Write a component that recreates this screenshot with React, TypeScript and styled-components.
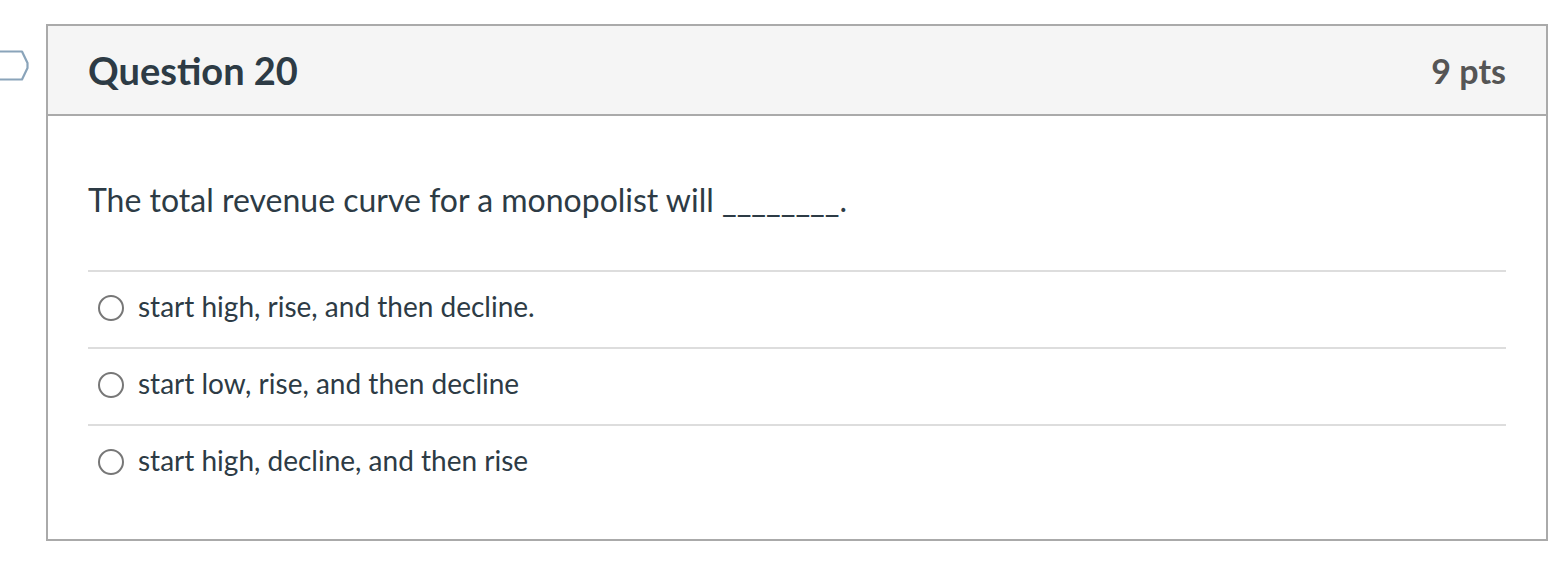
import React from 'react'
import styled, { createGlobalStyle } from 'styled-components'

const answers = [
  'start high, rise, and then decline.',
  'start low, rise, and then decline',
  'start high, decline, and then rise'
]

const GlobalStyle = createGlobalStyle`
  html, body {
    margin: 0;
    padding: 0;
    background: #fff;
  }
  body {
    font-family: Lato, "Noto Sans", sans-serif;
    color: #2d3b45;
  }
`

const App = () => {
  return (
    <Page>
      <GlobalStyle />
      <QuestionCard>
        <Flag width='30' height='32' viewBox='0 0 30 32'>
          <path d='M-4 1.5 H22 L27.5 13 V18 L22 29.5 H-4' fill='none' stroke='#8aa4ba' strokeWidth='2.2' strokeLinejoin='round' />
        </Flag>
        <Header>
          <Title>Question 20</Title>
          <Points>9 pts</Points>
        </Header>
        <Body>
          <QuestionText>The total revenue curve for a monopolist will ________.</QuestionText>
          <AnswerList>
            {answers.map((answer, index) => (
              <AnswerRow key={index}>
                <Radio type='radio' name='q20' />
                <AnswerLabel>{answer}</AnswerLabel>
              </AnswerRow>
            ))}
          </AnswerList>
        </Body>
      </QuestionCard>
    </Page>
  )
}

export default App

const Page = styled.div`
  padding: 24px 20px 40px 46px;
  width: 1568px;
  box-sizing: border-box;
`
const QuestionCard = styled.div`
  position: relative;
  width: 1502px;
  box-sizing: border-box;
  border: 2px solid #aaaaaa;
`
const Flag = styled.svg`
  position: absolute;
  left: -48px;
  top: 24px;
`
const Header = styled.div`
  display: flex;
  align-items: center;
  justify-content: space-between;
  height: 90px;
  box-sizing: border-box;
  padding: 0 40px;
  background: #f5f5f5;
  border-bottom: 2px solid #aaaaaa;
`
const Title = styled.h2`
  margin: 0;
  font-size: 38px;
  font-weight: 700;
  color: #2d3b45;
`
const Points = styled.span`
  font-size: 34px;
  font-weight: 700;
  color: #555555;
`
const Body = styled.div`
  padding: 60px 40px 38px;
`
const QuestionText = styled.p`
  margin: 0 0 46px;
  font-size: 32px;
  line-height: 48px;
`
const AnswerList = styled.div`
  display: flex;
  flex-direction: column;
`
const AnswerRow = styled.label`
  display: flex;
  align-items: flex-start;
  gap: 14px;
  height: 77px;
  box-sizing: border-box;
  padding: 17px 0 0 10px;
  border-top: 2px solid #dddddd;
`
const Radio = styled.input`
  appearance: none;
  flex-shrink: 0;
  margin: 6px 0 0;
  width: 26px;
  height: 26px;
  border: 2px solid #777777;
  border-radius: 50%;
  background: #fff;
  box-sizing: border-box;
`
const AnswerLabel = styled.span`
  font-size: 28px;
  line-height: 34px;
  color: #2d3b45;
`
